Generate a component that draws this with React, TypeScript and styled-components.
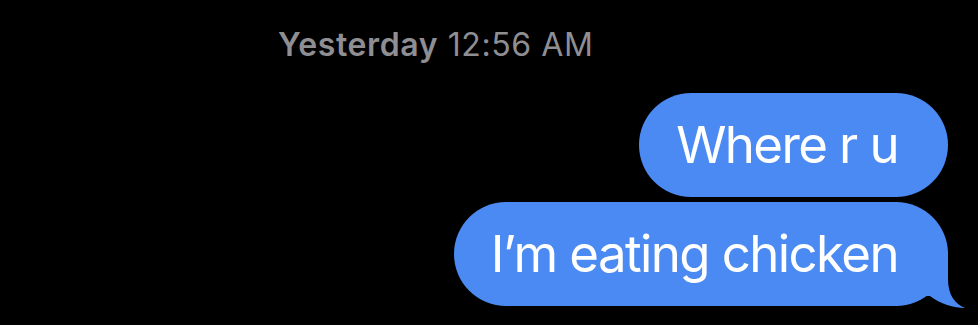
import React from "react";
import styled, { createGlobalStyle } from "styled-components";

const Global = createGlobalStyle`
  html, body { margin: 0; padding: 0; background: #000; }
  body { width: 978px; height: 325px; overflow: hidden; font-family: Inter, "Noto Sans", "Liberation Sans", sans-serif; }
`;

const Screen = styled.div`
  width: 978px;
  height: 325px;
  background: #000;
  display: flex;
  flex-direction: column;
  padding-top: 26px;
  box-sizing: border-box;
`;

const Stamp = styled.div`
  padding-left: 278px;
  font-size: 32px;
  line-height: 38px;
  color: #8e8e93;
  letter-spacing: 0.6px;
`;

const Day = styled.span`
  font-weight: 600;
`;

const Thread = styled.div`
  margin-top: 29px;
  display: flex;
  flex-direction: column;
  align-items: flex-end;
  gap: 5px;
  padding-right: 30px;
`;

const Bubble = styled.div`
  position: relative;
  background: #4a8af2;
  color: #fff;
  font-size: 51px;
  line-height: 62px;
  letter-spacing: -1.6px;
  padding: 21px 50px 21px 37px;
  border-radius: 52px;
  white-space: nowrap;
`;

const Tail = styled.svg`
  position: absolute;
  right: -18px;
  bottom: -2px;
  width: 48px;
  height: 57px;
  overflow: visible;
`;

export default function App() {
  return (
    <>
      <Global />
      <Screen>
        <Stamp>
          <Day>Yesterday</Day> 12:56 AM
        </Stamp>
        <Thread>
          <Bubble>Where r u</Bubble>
          <Bubble>
            I’m eating chicken
            <Tail viewBox="0 0 48 57">
              <path
                d="M0 0 L30 0 L30 28 C30 44 37 53 47 57 C36 57 22 53 12 45 L0 45 Z"
                fill="#4a8af2"
              />
            </Tail>
          </Bubble>
        </Thread>
      </Screen>
    </>
  );
}
